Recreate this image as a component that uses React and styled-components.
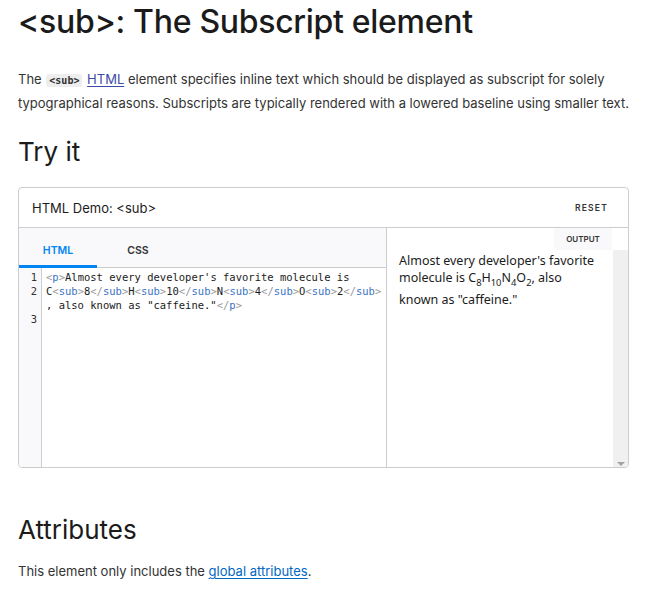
import React from 'react';
import styled, { createGlobalStyle } from 'styled-components';

const Global = createGlobalStyle`
    body {
        margin: 0;
        background: #fff;
        font-family: Inter, "Liberation Sans", sans-serif;
        color: #1b1b1b;
    }
`;

const Page = styled.main`
    padding: 0 25px 0 18px;
`;

const Title = styled.h1`
    font-size: 32px;
    font-weight: 500;
    line-height: 40px;
    margin: 2px 0 0;
    letter-spacing: -0.3px;
`;

const Intro = styled.p`
    font-size: 13px;
    line-height: 22px;
    margin: 26px 0 0;
    color: #333;
`;

const InlineCode = styled.code`
    font-family: "DejaVu Sans Mono", monospace;
    font-size: 10px;
    font-weight: bold;
    background: #eee;
    border-radius: 3px;
    padding: 1px 3px;
    margin: 0 1px;
`;

const Link = styled.a`
    color: #0069c2;
    text-decoration: underline;
    text-underline-offset: 2px;
    &.visited {
        color: #3c4aa8;
    }
`;

const Subtitle = styled.h2`
    font-size: 26px;
    font-weight: 400;
    line-height: 32px;
    margin: ${p => p.$top}px 0 0;
`;

const Demo = styled.section`
    margin-top: 19px;
    border: 1px solid #cdcdcd;
    border-radius: 4px;
    height: 281px;
    display: flex;
    flex-direction: column;
    box-sizing: border-box;
    overflow: hidden;
`;

const DemoHeader = styled.header`
    height: 39px;
    flex: none;
    display: flex;
    align-items: center;
    justify-content: space-between;
    padding: 0 20px 0 13px;
    border-bottom: 1px solid #cdcdcd;
    font-size: 13px;
    color: #1b1b1b;
`;

const Reset = styled.span`
    font-size: 8.5px;
    font-weight: 600;
    letter-spacing: 1.2px;
    color: #333;
`;

const Panels = styled.div`
    flex: 1;
    display: grid;
    grid-template-columns: 368px 1fr;
    min-height: 0;
`;

const Editor = styled.div`
    display: flex;
    flex-direction: column;
    border-right: 1px solid #cdcdcd;
`;

const Tabs = styled.div`
    height: 39px;
    flex: none;
    display: flex;
    background: #f9f9fb;
    border-bottom: 1px solid #cdcdcd;
`;

const Tab = styled.div`
    width: ${p => p.$w}px;
    display: flex;
    align-items: center;
    justify-content: center;
    font-size: 10.5px;
    font-weight: 600;
    color: ${p => (p.$active ? '#0085f2' : '#333')};
    border-bottom: 3px solid ${p => (p.$active ? '#0085f2' : 'transparent')};
    margin-bottom: -1px;
    padding-top: 7px;
    box-sizing: border-box;
`;

const Code = styled.div`
    flex: 1;
    display: flex;
    font-family: "DejaVu Sans Mono", monospace;
    font-size: 10.5px;
    line-height: 14px;
`;

const Gutter = styled.div`
    width: 23px;
    flex: none;
    background: #f9f9fb;
    border-right: 1px solid #cdcdcd;
    text-align: right;
    padding: 2px 4px 0 0;
    box-sizing: border-box;
    color: #333;
`;

const Lines = styled.pre`
    margin: 0;
    padding: 2px 0 0 4px;
    font: inherit;
    color: #1b1b1b;
    white-space: pre;
`;

const Punct = styled.span`
    color: #999;
`;

const TagName = styled.span`
    color: #3b74c5;
`;

const Output = styled.div`
    display: flex;
    flex-direction: column;
`;

const OutputBar = styled.div`
    height: 22px;
    flex: none;
    display: flex;
    justify-content: flex-end;
`;

const OutputLabel = styled.span`
    width: 58px;
    background: #f9f9fb;
    font-size: 8px;
    font-weight: 600;
    color: #333;
    display: flex;
    align-items: center;
    justify-content: center;
    margin-right: 16px;
    border-bottom-left-radius: 4px;
`;

const OutputBody = styled.div`
    flex: 1;
    display: flex;
`;

const Rendered = styled.p`
    flex: 1;
    margin: 0;
    padding: 2px 14px 0 12px;
    font-family: "Noto Sans", sans-serif;
    font-size: 12.5px;
    line-height: 17px;
    color: #1b1b1b;
    sub {
        font-size: 0.75em;
    }
`;

const Scrollbar = styled.div`
    width: 15px;
    background: #f0f0f0;
    position: relative;
    &::after {
        content: '';
        position: absolute;
        left: 4px;
        bottom: 1px;
        border-left: 4px solid transparent;
        border-right: 4px solid transparent;
        border-top: 4px solid #a3a3a3;
    }
`;

const Text = styled.p`
    font-size: 13px;
    line-height: 22px;
    margin: 14px 0 0;
    color: #333;
`;

const Tag = ({ name, close }) => (
    <>
        <Punct>{close ? '</' : '<'}</Punct>
        <TagName>{name}</TagName>
        <Punct>&gt;</Punct>
    </>
);

const App = () => {
    return (
        <Page>
            <Global />
            <Title>&lt;sub&gt;: The Subscript element</Title>
            <Intro>
                The <InlineCode>&lt;sub&gt;</InlineCode> <Link className="visited" href="#">HTML</Link> element specifies inline text which should be displayed as subscript for solely typographical reasons. Subscripts are typically rendered with a lowered baseline using smaller text.
            </Intro>
            <Subtitle $top={22}>Try it</Subtitle>
            <Demo>
                <DemoHeader>
                    <span>HTML Demo: &lt;sub&gt;</span>
                    <Reset>RESET</Reset>
                </DemoHeader>
                <Panels>
                    <Editor>
                        <Tabs>
                            <Tab $w={78} $active>HTML</Tab>
                            <Tab $w={82}>CSS</Tab>
                        </Tabs>
                        <Code>
                            <Gutter>1<br />2<br /><br />3</Gutter>
                            <Lines>
                                <Tag name="p" />Almost every developer's favorite molecule is{'\n'}
                                C<Tag name="sub" />8<Tag name="sub" close />H<Tag name="sub" />10<Tag name="sub" close />N<Tag name="sub" />4<Tag name="sub" close />O<Tag name="sub" />2<Tag name="sub" close />{'\n'}
                                , also known as "caffeine."<Tag name="p" close />
                            </Lines>
                        </Code>
                    </Editor>
                    <Output>
                        <OutputBar>
                            <OutputLabel>OUTPUT</OutputLabel>
                        </OutputBar>
                        <OutputBody>
                            <Rendered>
                                Almost every developer's favorite molecule is C<sub>8</sub>H<sub>10</sub>N<sub>4</sub>O<sub>2</sub>, also known as "caffeine."
                            </Rendered>
                            <Scrollbar />
                        </OutputBody>
                    </Output>
                </Panels>
            </Demo>
            <Subtitle $top={46}>Attributes</Subtitle>
            <Text>
                This element only includes the <Link href="#">global attributes</Link>.
            </Text>
        </Page>
    );
};

export default App;
